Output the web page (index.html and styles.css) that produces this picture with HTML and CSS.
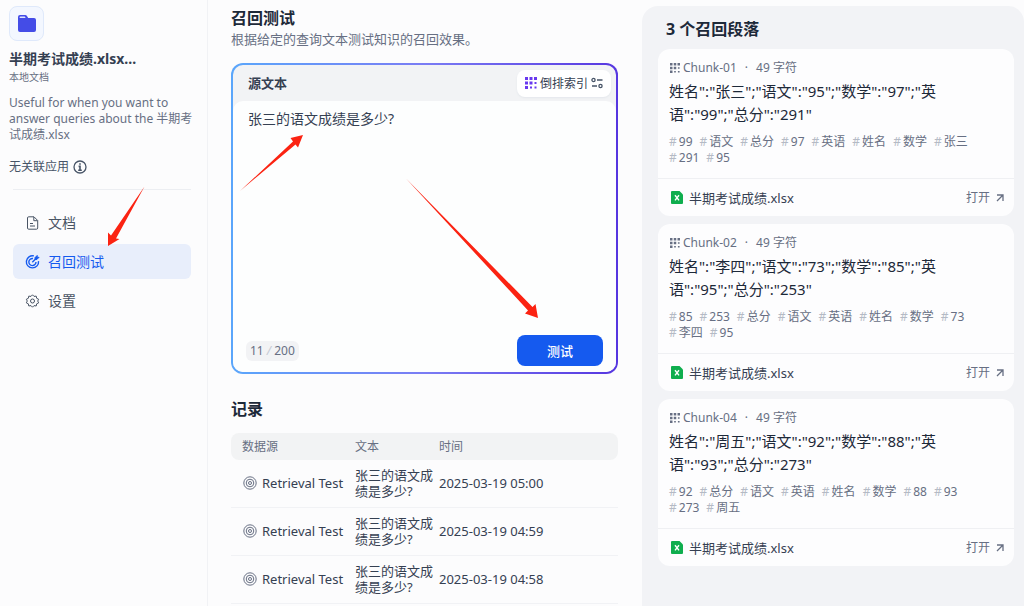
FILE: index.html
```html
<!DOCTYPE html>
<html lang="zh-CN">
<head>
    <meta charset="UTF-8">
    <meta name="viewport" content="width=device-width, initial-scale=1.0">
    <title>召回测试</title>
    <link rel="stylesheet" href="styles.css">
</head>
<body>
    <!-- shared icons -->
    <svg class="sprite" width="0" height="0">
        <symbol id="icon-grid" viewBox="0 0 12 12">
            <path d="M0 0h3v3H0zM4.5 0h3v3h-3zM9 0h3v3H9zM0 4.5h3v3H0zM4.5 4.5h3v3h-3zM9.5 5h2v2h-2zM0 9h3v3H0zM5 9.5h2v2H5zM9.5 9.5h2v2h-2z"/>
        </symbol>
        <symbol id="icon-target" viewBox="0 0 14 14">
            <g fill="none" stroke="currentColor">
                <circle cx="7" cy="7" r="6.2"/>
                <circle cx="7" cy="7" r="3.8"/>
                <circle cx="7" cy="7" r="1.5"/>
            </g>
        </symbol>
        <symbol id="icon-excel" viewBox="0 0 12 13">
            <path fill="#0fae4e" d="M1 0h7.5L12 3.5V12a1 1 0 0 1-1 1H1a1 1 0 0 1-1-1V1a1 1 0 0 1 1-1z"/>
            <path fill="none" stroke="#fff" stroke-width="1.4" d="M4 4.2l4 5.2M8 4.2L4 9.4"/>
        </symbol>
        <symbol id="icon-open" viewBox="0 0 8 8">
            <path fill="none" stroke="currentColor" stroke-width="1.3" d="M1 1h6v6M7 1L1 7"/>
        </symbol>
    </svg>

    <div class="layout">
        <aside class="sidebar">
            <div class="dataset-icon">
                <svg width="18" height="17" viewBox="0 0 18 17">
                    <path fill="#444ce7" d="M2 0h5.2a2 2 0 0 1 1.6.8L10.2 3H16a2 2 0 0 1 2 2v10a2 2 0 0 1-2 2H2a2 2 0 0 1-2-2V2a2 2 0 0 1 2-2z"/>
                    <path fill="#dfe4fb" d="M2.5 1.6h4.2l1 1.5H1.6v-.6a.9.9 0 0 1 .9-.9z"/>
                </svg>
            </div>
            <h2 class="dataset-name">半期考试成绩.xlsx...</h2>
            <p class="dataset-type">本地文档</p>
            <p class="dataset-desc">Useful for when you want to answer queries about the 半期考试成绩.xlsx</p>
            <div class="related">
                <span>无关联应用</span>
                <svg width="14" height="14" viewBox="0 0 14 14" fill="none" stroke="#475467">
                    <circle cx="7" cy="7" r="6" stroke-width="1.3"/>
                    <path stroke-width="1.6" d="M7 3.2v1.6M5.6 6.4H7v3.8M5.2 10.3h3.6"/>
                </svg>
            </div>
            <nav class="menu">
                <a href="#">
                    <svg width="14" height="14" viewBox="0 0 14 14" fill="none" stroke="currentColor">
                        <path d="M2 2a1.2 1.2 0 0 1 1.2-1.2h5.3L12.2 4.5V12a1.2 1.2 0 0 1-1.2 1.2H3.2A1.2 1.2 0 0 1 2 12zM8.3 1v3.7H12M4.5 7.5h3M4.5 10h5"/>
                    </svg>
                    文档
                </a>
                <a href="#" class="active">
                    <svg width="16" height="16" viewBox="0 0 16 16" fill="none" stroke="currentColor" stroke-width="1.5">
                        <path d="M9.5 1.5A6.5 6.5 0 1 0 14.4 7M8.5 4.3A3.8 3.8 0 1 0 11.7 8M7.800 8.200l3.700-3.700"/>
                        <path fill="currentColor" stroke-width="1" d="M10.7 3.3L13 1v2h2l-2.300 2.300h-2z"/>
                    </svg>
                    召回测试
                </a>
                <a href="#">
                    <svg width="14" height="14" viewBox="0 0 14 14" fill="none" stroke="currentColor">
                        <path d="M7 .8l1.5 1.600 2.200-.3.500 2.200 2 1L12.200 7l1 1.800-2 1-.5 2.200-2.200-.4L7 13.200l-1.500-1.600-2.200.4-.5-2.200-2-1L1.800 7l-1-1.700 2-1 .5-2.200 2.200.3z"/>
                        <circle cx="7" cy="7" r="2"/>
                    </svg>
                    设置
                </a>
            </nav>
        </aside>

        <main class="main">
            <h1>召回测试</h1>
            <p class="subtitle">根据给定的查询文本测试知识的召回效果。</p>

            <form class="query-card">
                <div class="query-head">
                    <label for="query">源文本</label>
                    <button type="button" class="method-btn">
                        <svg class="method-icon" width="12" height="12"><use href="#icon-grid"/></svg>
                        倒排索引
                        <svg width="12" height="12" viewBox="0 0 12 12" fill="none" stroke="#475467" stroke-width="1.3">
                            <circle cx="2.5" cy="3" r="1.6"/>
                            <circle cx="9.5" cy="9" r="1.6"/>
                            <path d="M6 3h5.500M1 9h5"/>
                        </svg>
                    </button>
                </div>
                <div class="query-body">
                    <textarea id="query" maxlength="200">张三的语文成绩是多少?</textarea>
                    <div class="query-foot">
                        <span class="counter">11 <i>/</i> 200</span>
                        <button type="button" class="test-btn">测试</button>
                    </div>
                </div>
            </form>

            <h2 class="records-title">记录</h2>
            <table class="records">
                <thead>
                    <tr><th class="col-source">数据源</th><th class="col-text">文本</th><th>时间</th></tr>
                </thead>
                <tbody>
                    <tr>
                        <td><div class="source"><svg width="14" height="14"><use href="#icon-target"/></svg>Retrieval Test</div></td>
                        <td>张三的语文成绩是多少?</td>
                        <td>2025-03-19 05:00</td>
                    </tr>
                    <tr>
                        <td><div class="source"><svg width="14" height="14"><use href="#icon-target"/></svg>Retrieval Test</div></td>
                        <td>张三的语文成绩是多少?</td>
                        <td>2025-03-19 04:59</td>
                    </tr>
                    <tr>
                        <td><div class="source"><svg width="14" height="14"><use href="#icon-target"/></svg>Retrieval Test</div></td>
                        <td>张三的语文成绩是多少?</td>
                        <td>2025-03-19 04:58</td>
                    </tr>
                </tbody>
            </table>
        </main>

        <section class="results">
            <h2>3 个召回段落</h2>

            <article class="chunk">
                <div class="chunk-body">
                    <div class="chunk-meta"><svg width="10" height="10"><use href="#icon-grid"/></svg>Chunk-01<span class="dot">·</span>49 字符</div>
                    <p class="chunk-text">姓名":"张三";"语文":"95";"数学":"97";"英语":"99";"总分":"291"</p>
                    <ul class="tags">
                        <li>99</li><li>语文</li><li>总分</li><li>97</li><li>英语</li><li>姓名</li><li>数学</li><li>张三</li><li>291</li><li>95</li>
                    </ul>
                </div>
                <div class="chunk-foot">
                    <svg width="12" height="13"><use href="#icon-excel"/></svg>
                    <span class="file">半期考试成绩.xlsx</span>
                    <a href="#">打开 <svg width="8" height="8"><use href="#icon-open"/></svg></a>
                </div>
            </article>

            <article class="chunk">
                <div class="chunk-body">
                    <div class="chunk-meta"><svg width="10" height="10"><use href="#icon-grid"/></svg>Chunk-02<span class="dot">·</span>49 字符</div>
                    <p class="chunk-text">姓名":"李四";"语文":"73";"数学":"85";"英语":"95";"总分":"253"</p>
                    <ul class="tags">
                        <li>85</li><li>253</li><li>总分</li><li>语文</li><li>英语</li><li>姓名</li><li>数学</li><li>73</li><li>李四</li><li>95</li>
                    </ul>
                </div>
                <div class="chunk-foot">
                    <svg width="12" height="13"><use href="#icon-excel"/></svg>
                    <span class="file">半期考试成绩.xlsx</span>
                    <a href="#">打开 <svg width="8" height="8"><use href="#icon-open"/></svg></a>
                </div>
            </article>

            <article class="chunk">
                <div class="chunk-body">
                    <div class="chunk-meta"><svg width="10" height="10"><use href="#icon-grid"/></svg>Chunk-04<span class="dot">·</span>49 字符</div>
                    <p class="chunk-text">姓名":"周五";"语文":"92";"数学":"88";"英语":"93";"总分":"273"</p>
                    <ul class="tags">
                        <li>92</li><li>总分</li><li>语文</li><li>英语</li><li>姓名</li><li>数学</li><li>88</li><li>93</li><li>273</li><li>周五</li>
                    </ul>
                </div>
                <div class="chunk-foot">
                    <svg width="12" height="13"><use href="#icon-excel"/></svg>
                    <span class="file">半期考试成绩.xlsx</span>
                    <a href="#">打开 <svg width="8" height="8"><use href="#icon-open"/></svg></a>
                </div>
            </article>
        </section>
    </div>

    <!-- red pointer arrows over the page -->
    <svg class="arrows" width="1024" height="606" viewBox="0 0 1024 606" fill="#fb2312">
        <path d="M144.5 186.5L116 238.500l3.500 0.500L108 246V232.500l3 3z"/>
        <path d="M240 191L293 141.5l-2.500-3.500L303 135l-5 12.500-2.500-3z"/>
        <path d="M406 178.5L532.5 307l3-3L538 318l-13-4.500 3-3z"/>
    </svg>
</body>
</html>
```
FILE: styles.css
```css
* {
    box-sizing: border-box;
}

body {
    margin: 0;
    font-family: "Noto Sans", "Noto Sans CJK SC", sans-serif;
    font-size: 13px;
    line-height: 16px;
    color: #354052;
    background-color: #fcfcfd;
}

h1, h2, p, ul {
    margin: 0;
    padding: 0;
}

a {
    color: inherit;
    text-decoration: none;
}

button {
    font-family: inherit;
    border: none;
    cursor: pointer;
}

svg {
    flex-shrink: 0;
}

.sprite, .arrows {
    position: absolute;
    top: 0;
    left: 0;
    pointer-events: none;
}

.layout {
    display: grid;
    grid-template-columns: 208px 434fr 382fr;
    min-height: 100vh;
}

/* sidebar */
.sidebar {
    padding: 6px 12px 0 9px;
    border-right: 1px solid #f1f2f5;
}

.dataset-icon {
    display: flex;
    align-items: center;
    justify-content: center;
    width: 35px;
    height: 35px;
    border: 1px solid #dfe9fb;
    border-radius: 8px;
    background-color: #f3f7ff;
}

.dataset-name {
    margin-top: 8px;
    font-size: 14px;
    line-height: 20px;
    color: #354052;
}

.dataset-type {
    font-size: 10px;
    color: #676f83;
}

.dataset-desc {
    margin-top: 10px;
    font-size: 12px;
    color: #676f83;
}

.related {
    display: flex;
    align-items: center;
    gap: 4px;
    margin-top: 16px;
    font-size: 12px;
    color: #475467;
}

.menu {
    display: flex;
    flex-direction: column;
    gap: 4px;
    margin: 14px 4px 0;
    padding-top: 15px;
    border-top: 1px solid #eceef2;
}

.menu a {
    display: flex;
    align-items: center;
    gap: 8px;
    height: 35px;
    padding-left: 12px;
    border-radius: 6px;
    font-size: 14px;
    color: #495464;
}

.menu svg {
    width: 15px;
}

.menu .active {
    background-color: #e8eefb;
    color: #155aef;
}

/* query */
.main {
    padding: 8px 24px 0 23px;
}

h1 {
    font-size: 16px;
    line-height: 20px;
    color: #1d2939;
}

.subtitle {
    margin-top: 3px;
    color: #676f83;
}

.query-card {
    margin-top: 16px;
    border: 2px solid transparent;
    border-radius: 12px;
    background: linear-gradient(#f2f3f5, #f2f3f5) padding-box,
        linear-gradient(to right, #5aa6fb, #7a7cf4 50%, #5636e0) border-box;
}

.query-head {
    display: flex;
    align-items: center;
    justify-content: space-between;
    height: 36px;
    padding: 0 5px 0 15px;
}

.query-head label {
    font-weight: bold;
    color: #354052;
}

.method-btn {
    display: flex;
    align-items: center;
    gap: 3px;
    height: 27px;
    padding: 0 8px;
    border-radius: 8px;
    background-color: #fff;
    box-shadow: 0 1px 2px #e4e7ec;
    font-size: 12px;
    color: #354052;
}

.method-icon {
    fill: #6938ef;
}

.query-body {
    padding: 8px 13px 6px;
    border-radius: 10px;
    background-color: #fdfefe;
}

textarea {
    display: block;
    width: 100%;
    height: 226px;
    padding: 0 2px;
    border: none;
    outline: none;
    resize: none;
    background: transparent;
    font-family: inherit;
    font-size: 14px;
    line-height: 20px;
    color: #354052;
}

.query-foot {
    display: flex;
    align-items: center;
    justify-content: space-between;
}

.counter {
    padding: 2px 4px;
    border-radius: 6px;
    background-color: #f2f3f5;
    font-size: 12px;
    color: #676f83;
}

.counter i {
    color: #c5cad3;
}

.test-btn {
    width: 86px;
    height: 31px;
    border-radius: 8px;
    background-color: #155aef;
    font-size: 13px;
    font-weight: 500;
    color: #fff;
}

/* records */
.records-title {
    margin-top: 25px;
    font-size: 16px;
    line-height: 20px;
    color: #1d2939;
}

.records {
    width: 100%;
    margin-top: 14px;
    border-spacing: 0;
    table-layout: fixed;
}

.records th {
    height: 27px;
    padding: 0 0 0 11px;
    background-color: #f2f3f4;
    font-size: 12px;
    font-weight: normal;
    text-align: left;
    color: #676f83;
}

.records th:first-child {
    border-radius: 8px 0 0 8px;
}

.records th:last-child {
    border-radius: 0 8px 8px 0;
}

.col-source {
    width: 119px;
}

.col-text {
    width: 84px;
}

.records td {
    height: 48px;
    padding: 0 0 2px 12px;
    border-bottom: 1px solid #f1f2f5;
    color: #354052;
}

.records tr > :nth-child(n + 2) {
    padding-left: 5px;
}

.source {
    display: flex;
    align-items: center;
    gap: 5px;
    white-space: nowrap;
}

.source svg {
    color: #676f83;
}

/* results */
.results {
    display: flex;
    flex-direction: column;
    gap: 8px;
    margin-top: 6px;
    padding: 13px 10px 0 16px;
    border-radius: 16px 16px 0 0;
    background-color: #f2f3f6;
}

.results h2 {
    margin-bottom: 2px;
    padding-left: 8px;
    font-size: 16px;
    line-height: 20px;
    color: #1d2939;
}

.chunk {
    border-radius: 12px;
    background-color: #fdfdfe;
}

.chunk-body {
    padding: 11px 32px 12px 11px;
}

.chunk-meta {
    display: flex;
    align-items: center;
    gap: 3px;
    margin-left: 1px;
    font-size: 12px;
    color: #676f83;
}

.chunk-meta svg {
    fill: #676f83;
}

.dot {
    margin: 0 5px;
}

.chunk-text {
    margin-top: 4px;
    font-size: 15px;
    line-height: 23px;
    color: #1d2939;
}

.tags {
    display: flex;
    flex-wrap: wrap;
    column-gap: 7px;
    margin-top: 8px;
    list-style: none;
    font-size: 12px;
    color: #676f83;
}

.tags li::before {
    content: "#";
    margin-right: 2px;
    color: #b4bac5;
}

.chunk-foot {
    display: flex;
    align-items: center;
    gap: 6px;
    height: 38px;
    padding: 0 10px 0 13px;
    border-top: 1px solid #eff0f3;
}

.chunk-foot a {
    display: flex;
    align-items: center;
    gap: 6px;
    margin-left: auto;
    font-size: 12px;
    color: #676f83;
}
```
